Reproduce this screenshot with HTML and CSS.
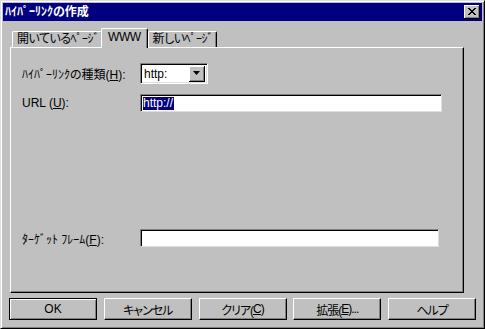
FILE: index.html
```html
<!DOCTYPE html>
<html lang="ja">

<head>
    <meta charset="UTF-8">
    <meta name="viewport" content="width=device-width, initial-scale=1.0">
    <title>ﾊｲﾊﾟｰﾘﾝｸの作成</title>
    <link rel="stylesheet" href="styles.css">
</head>

<body>
    <div class="dialog">
        <div class="titlebar">
            <span class="title">ﾊｲﾊﾟｰﾘﾝｸの作成</span>
            <span class="close">
                <svg width="8" height="7" viewBox="0 0 8 7">
                    <path d="M0 0h2v1h1v1h2V1h1V0h2v1H7v1H6v1H5v1h1v1h1v1h1v1H6V6H5V5H3v1H2v1H0V6h1V5h1V4h1V3H2V2H1V1H0z" fill="#000"/>
                </svg>
            </span>
        </div>
        <div class="tabs">
            <div class="tab">開いているﾍﾟｰｼﾞ</div>
            <div class="tab tab-active">WWW</div>
            <div class="tab">新しいﾍﾟｰｼﾞ</div>
        </div>
        <div class="panel">
            <div class="row">
                <label class="label">ﾊｲﾊﾟｰﾘﾝｸの種類(<u>H</u>):</label>
                <div class="select">
                    <span class="select-value">http:</span>
                    <span class="select-btn">
                        <svg width="7" height="4" viewBox="0 0 7 4"><path d="M0 0h7L3.5 4z" fill="#000"/></svg>
                    </span>
                </div>
            </div>
            <div class="row row-url">
                <label class="label">URL (<u>U</u>):</label>
                <div class="input input-url"><span class="sel">http://</span></div>
            </div>
            <div class="spacer"></div>
            <div class="row">
                <label class="label">ﾀｰｹﾞｯﾄ ﾌﾚｰﾑ(<u>F</u>):</label>
                <div class="input input-target"></div>
            </div>
        </div>
        <div class="buttons">
            <div class="btn btn-default">OK</div>
            <div class="btn">キャンセル</div>
            <div class="btn">クリア(<u>C</u>)</div>
            <div class="btn">拡張(<u>E</u>)...</div>
            <div class="btn">ヘルプ</div>
        </div>
    </div>
</body>

</html>
```

FILE: styles.css
```css
* {
    margin: 0;
    padding: 0;
    box-sizing: border-box;
}

body {
    background: #c0c0c0;
    font-family: "Liberation Sans", "Noto Sans CJK JP", sans-serif;
    font-size: 12px;
    font-feature-settings: "palt";
    color: #000;
}

u {
    text-decoration: underline;
    text-underline-offset: 1px;
}

.dialog {
    width: 485px;
    height: 329px;
    background: #c0c0c0;
    border: 1px solid;
    border-color: #dfdfdf #000 #000 #dfdfdf;
    box-shadow: inset 1px 1px #fff, inset -1px -1px #808080;
    padding: 2px;
    display: flex;
    flex-direction: column;
}

.titlebar {
    height: 18px;
    background: #000080;
    display: flex;
    align-items: center;
    justify-content: space-between;
    padding: 0 2px 0 2px;
}

.title {
    color: #fff;
    font-weight: bold;
    line-height: 18px;
}

.close {
    width: 16px;
    height: 14px;
    background: #c0c0c0;
    border-right: 1px solid #000;
    border-bottom: 1px solid #000;
    box-shadow: inset 1px 1px #fff, inset -1px -1px #808080;
    display: flex;
    align-items: center;
    justify-content: center;
    padding: 0 0 1px 0;
}

.close svg {
    display: block;
}

.tabs {
    margin-top: 7px;
    margin-left: 9px;
    height: 19px;
    display: flex;
    align-items: flex-end;
    position: relative;
    z-index: 1;
}

.tab {
    height: 16px;
    padding: 0 3px 0 4px;
    line-height: 15px;
    border-top: 1px solid #fff;
    border-left: 1px solid #fff;
    border-right: 1px solid #000;
    border-radius: 2px 2px 0 0;
    box-shadow: inset -1px 0 #808080;
    white-space: nowrap;
    letter-spacing: -0.5px;
}

.tab-active {
    height: 20px;
    margin: 0 -1px -1px -2px;
    padding: 0 6px 0 6px;
    line-height: 17px;
    background: #c0c0c0;
    position: relative;
    z-index: 2;
    letter-spacing: -0.5px;
}

.tab-active + .tab {
    margin-left: 1px;
}

.panel {
    margin-left: 7px;
    width: 454px;
    height: 246px;
    border: 1px solid;
    border-color: #fff #000 #000 #fff;
    box-shadow: inset -1px -1px #808080;
    padding: 15px 0 0 11px;
    display: flex;
    flex-direction: column;
}

.row {
    display: flex;
    align-items: center;
}

.label {
    flex: none;
    width: 118px;
    white-space: nowrap;
}

.row-url {
    margin-top: 10px;
}

.spacer {
    height: 117px;
}

.select {
    flex: none;
    width: 68px;
    height: 21px;
    background: #fff;
    border: 1px solid;
    border-color: #808080 #fff #fff #808080;
    box-shadow: inset 1px 1px #000, inset -1px -1px #dfdfdf;
    display: flex;
    align-items: center;
    justify-content: space-between;
    padding: 2px 2px 2px 3px;
}

.select-btn {
    width: 16px;
    height: 16px;
    background: #c0c0c0;
    border-right: 1px solid #000;
    border-bottom: 1px solid #000;
    box-shadow: inset 1px 1px #fff, inset -1px -1px #808080;
    display: flex;
    align-items: center;
    justify-content: center;
}

.select-btn svg {
    display: block;
}

.input {
    flex: none;
    height: 18px;
    background: #fff;
    border: 1px solid;
    border-color: #808080 #dfdfdf #dfdfdf #808080;
    box-shadow: inset 1px 1px #000;
    display: flex;
    align-items: center;
    padding: 0 2px 0 2px;
}

.input-url {
    width: 302px;
}

.input-target {
    width: 299px;
}

.sel {
    background: #000080;
    color: #fff;
    line-height: 13px;
    padding: 0 1px 0 0;
}

.buttons {
    margin: 5px 6px 0 6px;
    display: flex;
    justify-content: space-between;
}

.btn {
    width: 88px;
    height: 22px;
    border: 1px solid;
    border-color: #fff #000 #000 #fff;
    box-shadow: inset -1px -1px #808080;
    display: flex;
    align-items: center;
    justify-content: center;
    white-space: nowrap;
    letter-spacing: -1px;
}

.btn-default {
    border: 1px solid #000;
    box-shadow: inset 1px 1px #fff, inset -1px -1px #808080;
    letter-spacing: 0;
}
```
